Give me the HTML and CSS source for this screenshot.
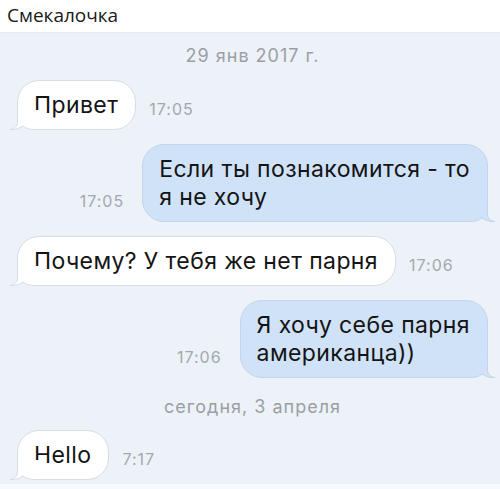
FILE: index.html
```html
<!DOCTYPE html>
<html lang="ru">
<head>
    <meta charset="UTF-8" />
    <meta name="viewport" content="width=device-width, initial-scale=1.0"/>
    <title>Смекалочка</title>
    <link rel="stylesheet" href="styles.css">
</head>
<body>
<div class="screen">
    <div class="header">Смекалочка</div>

    <div class="chat">
        <div class="date">29 янв 2017 г.</div>

        <div class="row in">
            <div class="bubble">Привет
                <svg class="tail" width="30" height="20" viewBox="0 0 30 20"><path class="tail-fill" d="M8.5 0V12C8.5 16 5.5 18.8 1 19.5C6 20 10.5 18.5 14 16C17 18.5 20.5 19.5 26 19.5H30V0Z"/><path class="tail-line" d="M8.5 0V12C8.5 16 5.5 18.8 1 19.5C6 20 10.5 18.5 14 16C17 18.5 20.5 19.5 26 19.5H30"/></svg>
            </div>
            <span class="time">17:05</span>
        </div>

        <div class="row out">
            <span class="time">17:05</span>
            <div class="bubble">Если ты познакомится - то<br>я не хочу
                <svg class="tail" width="30" height="20" viewBox="0 0 30 20"><path class="tail-fill" d="M8.5 0V12C8.5 16 5.5 18.8 1 19.5C6 20 10.5 18.5 14 16C17 18.5 20.5 19.5 26 19.5H30V0Z"/><path class="tail-line" d="M8.5 0V12C8.5 16 5.5 18.8 1 19.5C6 20 10.5 18.5 14 16C17 18.5 20.5 19.5 26 19.5H30"/></svg>
            </div>
        </div>

        <div class="row in">
            <div class="bubble">Почему? У тебя же нет парня
                <svg class="tail" width="30" height="20" viewBox="0 0 30 20"><path class="tail-fill" d="M8.5 0V12C8.5 16 5.5 18.8 1 19.5C6 20 10.5 18.5 14 16C17 18.5 20.5 19.5 26 19.5H30V0Z"/><path class="tail-line" d="M8.5 0V12C8.5 16 5.5 18.8 1 19.5C6 20 10.5 18.5 14 16C17 18.5 20.5 19.5 26 19.5H30"/></svg>
            </div>
            <span class="time">17:06</span>
        </div>

        <div class="row out">
            <span class="time">17:06</span>
            <div class="bubble">Я хочу себе парня<br>американца))
                <svg class="tail" width="30" height="20" viewBox="0 0 30 20"><path class="tail-fill" d="M8.5 0V12C8.5 16 5.5 18.8 1 19.5C6 20 10.5 18.5 14 16C17 18.5 20.5 19.5 26 19.5H30V0Z"/><path class="tail-line" d="M8.5 0V12C8.5 16 5.5 18.8 1 19.5C6 20 10.5 18.5 14 16C17 18.5 20.5 19.5 26 19.5H30"/></svg>
            </div>
        </div>

        <div class="date today">сегодня, 3 апреля</div>

        <div class="row in">
            <div class="bubble">Hello
                <svg class="tail" width="30" height="20" viewBox="0 0 30 20"><path class="tail-fill" d="M8.5 0V12C8.5 16 5.5 18.8 1 19.5C6 20 10.5 18.5 14 16C17 18.5 20.5 19.5 26 19.5H30V0Z"/><path class="tail-line" d="M8.5 0V12C8.5 16 5.5 18.8 1 19.5C6 20 10.5 18.5 14 16C17 18.5 20.5 19.5 26 19.5H30"/></svg>
            </div>
            <span class="time">7:17</span>
        </div>
    </div>

    <div class="footer"></div>
</div>
</body>
</html>
```

FILE: styles.css
```css
body {
    margin: 0;
    padding: 0;
    font-family: Inter, Roboto, 'Liberation Sans', sans-serif;
    color: #141414;
}

.screen {
    width: 500px;
    height: 489px;
    display: flex;
    flex-direction: column;
    background-color: #edf2f8;
    overflow: hidden;
}

.header {
    height: 33px;
    box-sizing: border-box;
    padding: 1px 0 0 7px;
    background-color: #fff;
    border-bottom: 1px solid #e6ebf1;
    font-family: 'Open Sans', 'Liberation Sans', sans-serif;
    font-size: 19px;
    line-height: 28px;
    color: #1a1a1a;
}

.chat {
    flex: 1;
    display: flex;
    flex-direction: column;
    gap: 14px;
    padding: 12px 12px 0 17px;
}

.date {
    text-align: center;
    color: #9b9fa5;
    font-size: 18px;
    line-height: 22px;
    letter-spacing: 1px;
    margin-bottom: -1px;
}

.date.today {
    margin-top: 4px;
    margin-bottom: -2px;
}

.row {
    display: flex;
    align-items: flex-end;
    gap: 13px;
}

.row.out {
    justify-content: flex-end;
    gap: 18px;
}

.bubble {
    position: relative;
    padding: 10px 17px 10px 16px;
    font-size: 23px;
    line-height: 28px;
    letter-spacing: 0.4px;
    border: 1px solid #d6dde6;
    border-radius: 22px;
    background-color: #fff;
}

.out .bubble {
    background-color: #d0e2f7;
    border-color: #c2d5ec;
}

.tail {
    position: absolute;
    left: -9px;
    bottom: -1px;
}

.out .tail {
    left: auto;
    right: -9px;
    transform: scaleX(-1);
}

.tail-fill {
    fill: #fff;
}

.tail-line {
    fill: none;
    stroke: #d6dde6;
    stroke-width: 1;
}

.out .tail-fill {
    fill: #d0e2f7;
}

.out .tail-line {
    stroke: #c2d5ec;
}

.time {
    color: #a3a8af;
    font-size: 16px;
    line-height: 20px;
    letter-spacing: 1px;
    padding-bottom: 11px;
}

.footer {
    height: 5px;
    background-color: #f7f9fc;
}
```
